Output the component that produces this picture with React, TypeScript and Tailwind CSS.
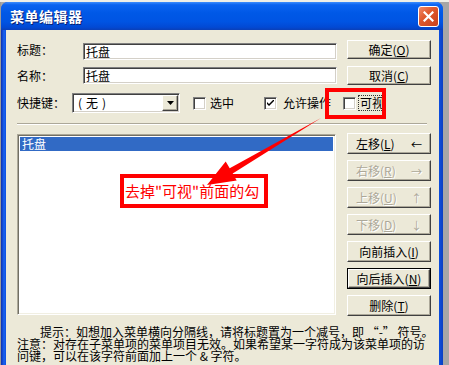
import React from "react";

const raised =
  "border border-t-white border-l-white border-r-[#404040] border-b-[#404040] shadow-[inset_-1px_-1px_0_#aca899] bg-[#ece9d8]";

function Btn({
  children,
  disabled,
  isDefault,
  tall,
  arrow,
}: {
  children: React.ReactNode;
  disabled?: boolean;
  isDefault?: boolean;
  tall?: boolean;
  arrow?: string;
}) {
  return (
    <div
      className={`w-[84px] ${tall ? "h-[21px]" : "h-[19px]"} ${
        isDefault ? "border border-black" : ""
      }`}
    >
      <div
        className={`${raised} flex items-center w-full h-full ${
          arrow ? "justify-between pl-[8px] pr-[8px]" : "justify-center"
        } ${disabled ? "text-[#aca899] [text-shadow:1px_1px_0_#ffffff]" : "text-black"}`}
      >
        <span className="whitespace-nowrap">{children}</span>
        {arrow ? <span className="text-[11px]">{arrow}</span> : null}
      </div>
    </div>
  );
}

function Check({ checked }: { checked?: boolean }) {
  return (
    <div className="w-[13px] h-[13px] bg-white border border-[#808080] border-b-white border-r-white shadow-[inset_1px_1px_0_#404040,inset_-1px_-1px_0_#d4d0c8] flex items-center justify-center">
      {checked ? (
        <svg width="7" height="7" viewBox="0 0 7 7">
          <path d="M0 2 L0 4 L2 6 L7 1 L7 -1 L2 4 Z" fill="#000" />
        </svg>
      ) : null}
    </div>
  );
}

const sunken =
  "bg-white border border-[#808080] border-b-white border-r-white shadow-[inset_1px_1px_0_#404040,inset_-1px_-1px_0_#d4d0c8]";

export default function App() {
  return (
    <div className="relative w-[449px] h-[365px] overflow-hidden bg-[#a6a6a6] font-['Noto_Sans_CJK_SC','Liberation_Sans',sans-serif] text-[12px] leading-[12px] text-black">
      <div className="h-[2px] bg-[#efeee7]" />
      <div className="flex h-[363px]">
        <div className="w-[1px] bg-[#9a9a9a]" />
        <div className="w-[442px] flex flex-col rounded-t-[7px] overflow-hidden bg-[#0a4be0]">
          {/* Title bar */}
          <div className="h-[28px] flex items-center justify-between pl-[9px] pr-[4px] bg-[linear-gradient(to_bottom,#3d8dfd_0%,#0b63f0_10%,#0058e6_40%,#0054e3_70%,#0249d4_90%,#0a3fb8_100%)]">
            <span className="text-white font-bold text-[14px] leading-[14px] tracking-[0.5px] [text-shadow:1px_1px_0_#0a1f6f]">
              菜单编辑器
            </span>
            <div className="w-[21px] h-[21px] rounded-[3px] border border-white bg-[linear-gradient(135deg,#f08a6a_0%,#e05a2e_40%,#c8401c_100%)] flex items-center justify-center">
              <svg width="11" height="11" viewBox="0 0 11 11">
                <path d="M1.5 1.5 L9.5 9.5 M9.5 1.5 L1.5 9.5" stroke="#fff" strokeWidth="2.2" strokeLinecap="square" />
              </svg>
            </div>
          </div>
          <div className="flex flex-1">
            <div className="w-[5px] bg-[linear-gradient(to_right,#0a2fb0,#1a62f0_60%,#0c4fe0)]" />
            <div className="flex-1 bg-[#ece9d8] pl-[11px] pt-[10px]">
              {/* Row 1 */}
              <div className="flex items-start h-[20px]">
                <div className="w-[66px] pt-[4px]">标题：</div>
                <div className={`${sunken} mt-[3px] w-[254px] h-[17px] pl-[2px] flex items-center`}>托盘</div>
                <div className="ml-[10px]">
                  <Btn>
                    确定(<span className="underline">O</span>)
                  </Btn>
                </div>
              </div>
              {/* Row 2 */}
              <div className="flex items-start h-[20px] mt-[6px]">
                <div className="w-[66px] pt-[4px]">名称：</div>
                <div className={`${sunken} mt-[1px] w-[254px] h-[17px] pl-[2px] flex items-center`}>托盘</div>
                <div className="ml-[10px]">
                  <Btn>
                    取消(<span className="underline">C</span>)
                  </Btn>
                </div>
              </div>
              {/* Row 3 */}
              <div className="flex items-center h-[20px] mt-[7px]">
                <div className="w-[55px]">快捷键：</div>
                <div className={`${sunken} w-[108px] h-[20px] flex items-center justify-between pl-[5px] pr-[1px]`}>
                  <span className="flex items-center">
                    <span>(</span>
                    <span className="mx-[4px]">无</span>
                    <span>)</span>
                  </span>
                  <div className={`${raised} w-[16px] h-[16px] flex items-center justify-center`}>
                    <svg width="7" height="4" viewBox="0 0 7 4">
                      <path d="M0 0 H7 L3.5 4 Z" fill="#000" />
                    </svg>
                  </div>
                </div>
                <div className="ml-[13px]">
                  <Check />
                </div>
                <span className="ml-[4px]">选中</span>
                <div className="ml-[30px]">
                  <Check checked />
                </div>
                <span className="ml-[6px]">允许操作</span>
                <div className="ml-[12px]">
                  <Check />
                </div>
                <span className="ml-[3px] px-[1px] py-[1px] outline outline-1 outline-dotted outline-[#333]">可视</span>
              </div>
              {/* Separator */}
              <div className="mt-[10px] w-[410px] border-t border-t-[#aca899] border-b border-b-white" />
              {/* List + buttons */}
              <div className="flex items-start mt-[8px]">
                <div className="mt-[1px] w-[319px] h-[181px] bg-white border border-[#aca899] border-b-white border-r-white shadow-[inset_1px_1px_0_#716f64,inset_-1px_-1px_0_#f1efe2] p-[2px]">
                  <div className="h-[14px] bg-[#316ac5] text-white pl-[2px] flex items-center">托盘</div>
                </div>
                <div className="ml-[11px] flex flex-col gap-[6px]">
                  <Btn tall arrow="←">
                    左移(<span className="underline">L</span>)
                  </Btn>
                  <Btn tall disabled arrow="→">
                    右移(<span className="underline">R</span>)
                  </Btn>
                  <Btn tall disabled arrow="↑">
                    上移(<span className="underline">U</span>)
                  </Btn>
                  <Btn tall disabled arrow="↓">
                    下移(<span className="underline">D</span>)
                  </Btn>
                  <Btn tall>
                    向前插入(<span className="underline">I</span>)
                  </Btn>
                  <Btn tall isDefault>
                    向后插入(<span className="underline">N</span>)
                  </Btn>
                  <Btn tall>
                    删除(<span className="underline">T</span>)
                  </Btn>
                </div>
              </div>
              {/* Hint text */}
              <div className="mt-[10px] leading-[12px]">
                <div className="pl-[23px] whitespace-nowrap">提示：如想加入菜单横向分隔线，请将标题置为一个减号，即 “-” 符号。</div>
                <div className="whitespace-nowrap">注意：对存在子菜单项的菜单项目无效。如果希望某一字符成为该菜单项的访</div>
                <div className="whitespace-nowrap">问键，可以在该字符前面加上一个 &amp; 字符。</div>
              </div>
            </div>
            <div className="w-[4px] bg-[linear-gradient(to_right,#0c4fe0,#0a3fc0)]" />
          </div>
        </div>
      </div>

      {/* Annotations */}
      <div className="absolute left-[325px] top-[88px] w-[61px] h-[31px] border-[4px] border-[#ff0000]" />
      <div className="absolute left-[120px] top-[174px] w-[148px] h-[34px] border-[4px] border-[#ff0000] flex items-center pl-[1px]">
        <span className="text-[#ff0000] text-[15px] leading-[16px] whitespace-nowrap">去掉"可视"前面的勾</span>
      </div>
      <svg className="absolute left-0 top-0" width="449" height="365" viewBox="0 0 449 365">
        <polygon
          points="321,118 232.7,173.5 236.7,180.4 207,185 225.7,161.4 229.7,168.3"
          fill="#ff0000"
        />
      </svg>
    </div>
  );
}
